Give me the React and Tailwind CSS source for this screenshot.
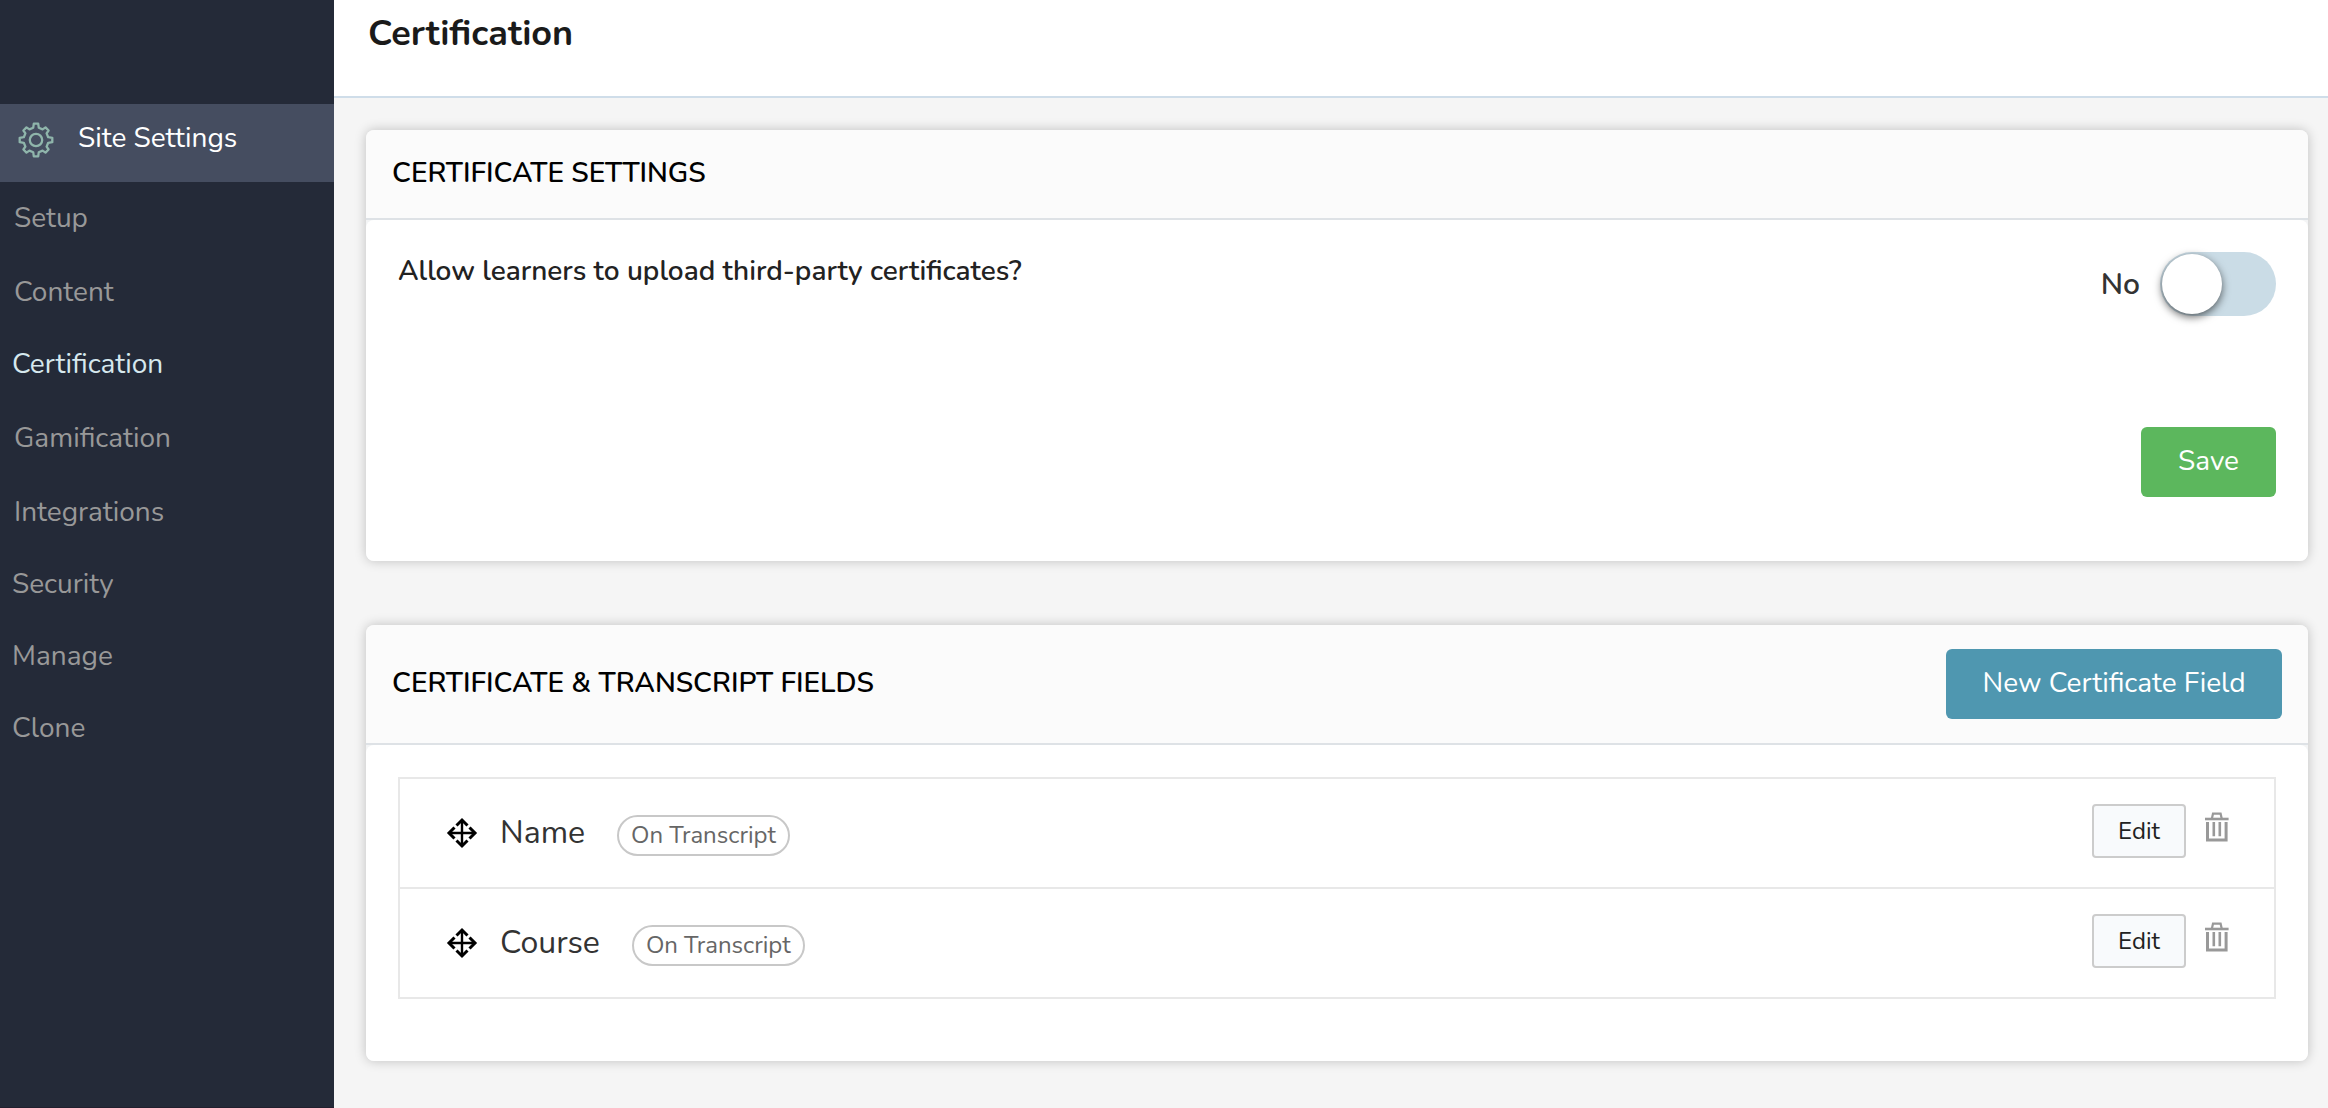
import React, { useState } from 'react';

const navItems = [
  { label: 'Setup', group: true },
  { label: 'Content', group: true },
  { label: 'Certification', active: true },
  { label: 'Gamification', group: true },
  { label: 'Integrations', group: true },
  { label: 'Security' },
  { label: 'Manage' },
  { label: 'Clone' },
];

const fields = ['Name', 'Course'];

const GearIcon = () => (
  <svg width="36" height="36" viewBox="0 0 36 36" fill="none" stroke="#8fb5ab" strokeWidth="2.3" strokeLinejoin="round">
    <path d="M15.2 5.8 15.8 1.7 20.2 1.7 20.8 5.8 24.6 7.4 27.5 5.4 30.6 8.5 28.6 11.4 30.2 15.2 34.3 15.8 34.3 20.2 30.2 20.8 28.6 24.6 30.6 27.5 27.5 30.6 24.6 28.6 20.8 30.2 20.2 34.3 15.8 34.3 15.2 30.2 11.4 28.6 8.5 30.6 5.4 27.5 7.4 24.6 5.8 20.8 1.7 20.2 1.7 15.8 5.8 15.2 7.4 11.4 5.4 8.5 8.5 5.4 11.4 7.4z" />
    <circle cx="18" cy="18" r="6.2" />
  </svg>
);

const MoveIcon = () => (
  <svg width="32" height="32" viewBox="0 0 32 32" fill="none" stroke="#000" strokeWidth="3">
    <path d="M16 3v26M3 16h26" strokeWidth="2.4" />
    <path d="M10.5 8.5 16 3l5.5 5.5M10.5 23.5 16 29l5.5-5.5M8.5 10.5 3 16l5.5 5.5M23.5 10.5 29 16l-5.5 5.5" />
  </svg>
);

const TrashIcon = () => (
  <svg width="26" height="30" viewBox="0 0 26 30" fill="none" stroke="#999" strokeWidth="2.6">
    <path d="M1 7h23.6" />
    <path d="M7.9 6.5 9 1.7h7.6l1.1 4.8" strokeWidth="2.2" />
    <path d="M3.5 10v18h18.6V10" strokeWidth="3" />
    <path d="M9.8 10v14.2M15.8 10v14.2" />
  </svg>
);

const Sidebar = () => (
  <aside className="w-[334px] shrink-0 bg-[#242a38] pt-[104px] border-b border-[#221f2e]">
    <a href="#settings" className="flex items-center gap-6 h-[78px] pl-[18px] pb-1.5 bg-[#454d60] text-white text-[28px]">
      <GearIcon />
      <span className="pb-1">Site Settings</span>
    </a>
    <nav>
      {navItems.map((item) => (
        <a
          key={item.label}
          href={`#${item.label.toLowerCase()}`}
          className={`flex items-center text-[28px] ${item.group ? 'h-[74px] pl-[14px] pb-0.5' : 'h-[72px] pl-3 pb-1'} ${
            item.active ? 'text-[#d6e8ee]' : 'text-[#989898]'
          }`}
        >
          {item.label}
        </a>
      ))}
    </nav>
  </aside>
);

const Card = ({ title, action, children }) => (
  <section className="rounded-lg bg-[#f3f4f5] shadow-[0_0_12px_rgba(0,0,0,0.22)]">
    <div className="flex items-center justify-between rounded-t-lg bg-[#fbfbfb] border-b-2 border-[#dee2e6] px-[26px] min-h-[90px] text-black">
      <h2 className="pb-0.5 text-[28px] font-semibold">{title}</h2>
      {action}
    </div>
    <div className="rounded-lg bg-white p-8">{children}</div>
  </section>
);

const FieldRow = ({ name }) => (
  <li className="flex items-center justify-between h-[110px] border-b-2 border-[#e8e8e8] pl-[46px] pr-11">
    <div className="flex items-center">
      <MoveIcon />
      <span className="ml-[22px] text-[32px] text-[#333]">{name}</span>
      <span className="ml-8 mt-1 flex items-center h-[41px] px-3 rounded-full border-2 border-[#c8c8c8] text-2xl text-[#666]">
        On Transcript
      </span>
    </div>
    <div className="flex items-center gap-[18px] pb-1">
      <button className="h-[54px] w-[94px] rounded border-2 border-[#ccc] bg-[#f8fafc] text-2xl text-[#222]">Edit</button>
      <button aria-label={`Delete ${name}`} className="pb-2">
        <TrashIcon />
      </button>
    </div>
  </li>
);

const App = () => {
  const [allowUpload, setAllowUpload] = useState(false);

  return (
    <div className="flex min-h-screen bg-[#f5f5f5] font-['Nunito',Lato,sans-serif]">
      <Sidebar />

      <main className="flex-1 min-w-0">
        <header className="h-[98px] bg-white border-b-2 border-[#cfdde9] pl-[34px] pt-[9px]">
          <h1 className="text-4xl leading-[50px] font-bold text-[#1a1a1a]">Certification</h1>
        </header>

        <div className="flex flex-col gap-16 pl-8 pr-5 py-8">
          <Card title="CERTIFICATE SETTINGS">
            <div className="flex items-start justify-between">
              <label htmlFor="allow-upload" className="text-[28px] leading-[38px] font-[650] text-[#222]">
                Allow learners to upload third-party certificates?
              </label>
              <div className="flex items-center gap-5">
                <span className="text-[30px] font-semibold text-[#333]">{allowUpload ? 'Yes' : 'No'}</span>
                <input
                  id="allow-upload"
                  type="checkbox"
                  role="switch"
                  checked={allowUpload}
                  onChange={(e) => setAllowUpload(e.target.checked)}
                  className="appearance-none w-[116px] h-16 p-0.5 rounded-full bg-[#cadce6] checked:bg-[#5cb75d] before:block before:size-[60px] before:rounded-full before:bg-white before:shadow-[0_3px_8px_rgba(0,0,0,0.6)] checked:before:ml-[52px]"
                />
              </div>
            </div>
            <div className="flex justify-end mt-[111px] mb-8">
              <button className="h-[70px] w-[135px] pb-0.5 rounded-md bg-[#5cb75d] text-white text-[28px]">Save</button>
            </div>
          </Card>

          <Card
            title="CERTIFICATE & TRANSCRIPT FIELDS"
            action={
              <button className="h-[70px] w-[336px] my-6 pb-0.5 rounded-md bg-[#4f97b0] text-white text-[28px]">
                New Certificate Field
              </button>
            }
          >
            <ul className="mb-[30px] border-2 border-b-0 border-[#e8e8e8]">
              {fields.map((name) => (
                <FieldRow key={name} name={name} />
              ))}
            </ul>
          </Card>
        </div>
      </main>
    </div>
  );
};

export default App;
